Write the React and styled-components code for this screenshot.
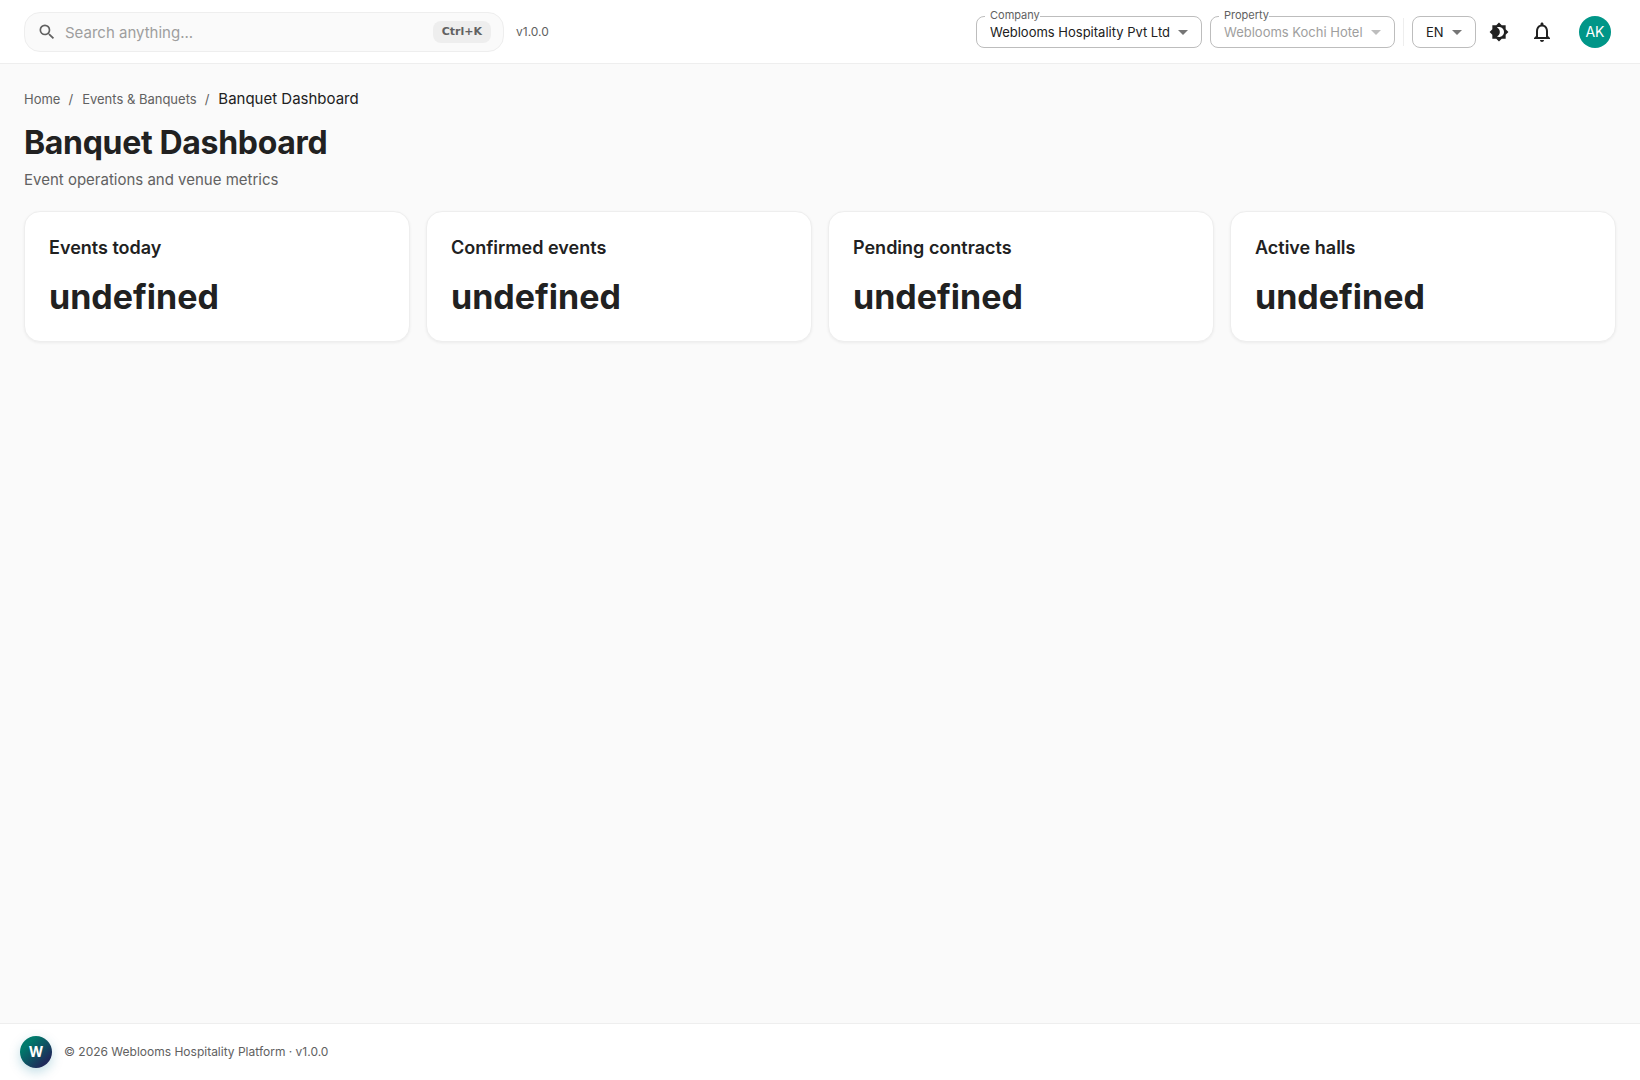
import React from 'react';
import styled, {createGlobalStyle} from 'styled-components';
import {MdSearch, MdBrightness4, MdNotificationsNone, MdArrowDropDown} from 'react-icons/md';

const GlobalStyle = createGlobalStyle`
:root {
  --primary: #009688;
  --text: #212121;
  --muted: #616161;
  --disabled: #9e9e9e;
  --line: #eeeeee;
  --page: #fafafa;
}
* { box-sizing: border-box; }
body {
  margin: 0;
  background: var(--page);
  color: var(--text);
  font-family: Inter, Roboto, sans-serif;
}
button, input, select { font-family: inherit; }
`;

const stats = ['Events today', 'Confirmed events', 'Pending contracts', 'Active halls'];

function SelectField({id, label, value, disabled}) {
  return <Field $disabled={disabled}>
    {label && <FieldLabel htmlFor={id}>{label}</FieldLabel>}
    <Select id={id} aria-label={label ? undefined : 'Language'} disabled={disabled}>
      <option>{value}</option>
    </Select>
    <MdArrowDropDown/>
  </Field>;
}

export default function App() {
  return <Shell>
    <GlobalStyle/>
    <Header>
      <SearchBox>
        <MdSearch/>
        <SearchInput type="search" aria-label="Search" placeholder="Search anything..."/>
        <Shortcut>Ctrl+K</Shortcut>
      </SearchBox>
      <Version>v1.0.0</Version>
      <Tools>
        <SelectField id="company" label="Company" value="Weblooms Hospitality Pvt Ltd"/>
        <SelectField id="property" label="Property" value="Weblooms Kochi Hotel" disabled/>
        <Divider/>
        <SelectField id="language" value="EN"/>
        <IconGroup>
          <IconButton aria-label="Toggle theme"><MdBrightness4 size={20}/></IconButton>
          <IconButton aria-label="Notifications"><MdNotificationsNone size={24}/></IconButton>
        </IconGroup>
        <Avatar aria-label="Account">AK</Avatar>
      </Tools>
    </Header>
    <Main>
      <nav aria-label="Breadcrumb">
        <Crumbs>
          <li><CrumbLink href="#home">Home</CrumbLink></li>
          <Slash>/</Slash>
          <li><CrumbLink href="#events">Events &amp; Banquets</CrumbLink></li>
          <Slash>/</Slash>
          <Current>Banquet Dashboard</Current>
        </Crumbs>
      </nav>
      <Title>Banquet Dashboard</Title>
      <Subtitle>Event operations and venue metrics</Subtitle>
      <CardGrid>
        {stats.map(name => <Card key={name}>
          <CardTitle>{name}</CardTitle>
          <CardValue>undefined</CardValue>
        </Card>)}
      </CardGrid>
    </Main>
    <Footer>
      <Brand>W</Brand>
      <span>© 2026 Weblooms Hospitality Platform · v1.0.0</span>
    </Footer>
  </Shell>;
}

const Shell = styled.div`
display: flex;
flex-direction: column;
min-height: 100vh;
`;

const Header = styled.header`
display: flex;
align-items: center;
height: 64px;
padding: 0 24px;
background: #fff;
border-bottom: 1px solid var(--line);
`;

const SearchBox = styled.div`
display: flex;
align-items: center;
flex: 0 1 480px;
height: 40px;
padding: 0 12px;
border: 1px solid var(--line);
border-radius: 16px;
background: var(--page);
> svg {
  flex: none;
  width: 20px;
  height: 20px;
  color: var(--muted);
}
`;

const SearchInput = styled.input`
flex: 1;
min-width: 0;
margin-left: 8px;
padding: 2px 0 0;
border: 0;
outline: 0;
background: transparent;
font-size: 15px;
line-height: 24px;
color: var(--text);
&::placeholder { color: var(--disabled); }
`;

const Shortcut = styled.kbd`
padding: 0 9px;
border-radius: 8px;
background: #eeeeee;
color: var(--muted);
font-family: "DejaVu Sans", sans-serif;
font-size: 11px;
font-weight: 700;
line-height: 22px;
`;

const Version = styled.span`
margin-left: 12px;
color: var(--muted);
font-size: 12px;
`;

const Tools = styled.div`
display: flex;
align-items: center;
gap: 8px;
margin-left: auto;
`;

const Field = styled.div`
display: flex;
align-items: center;
position: relative;
height: 32px;
border: 1px solid #bdbdbd;
border-radius: 8px;
color: ${props => props.$disabled ? 'var(--disabled)' : 'var(--text)'};
> svg {
  position: absolute;
  right: 6px;
  width: 24px;
  height: 24px;
  color: ${props => props.$disabled ? '#bdbdbd' : '#757575'};
  pointer-events: none;
}
`;

const FieldLabel = styled.label`
position: absolute;
top: -9px;
left: 8px;
padding-left: 5px;
background: #fff;
color: var(--muted);
font-size: 11px;
line-height: 14px;
`;

const Select = styled.select`
appearance: none;
height: 30px;
padding: 0 31px 0 13px;
border: 0;
border-radius: 8px;
background: transparent;
color: inherit;
font-size: 13px;
opacity: 1;
`;

const Divider = styled.div`
width: 1px;
height: 28px;
background: var(--line);
`;

const IconGroup = styled.div`
display: flex;
gap: 3px;
margin-left: -5px;
`;

const IconButton = styled.button`
display: flex;
align-items: center;
justify-content: center;
width: 40px;
height: 40px;
padding: 0;
border: 0;
border-radius: 50%;
background: transparent;
color: var(--text);
`;

const Avatar = styled.button`
width: 32px;
height: 32px;
margin: 0 5px 0 9px;
padding: 0;
border: 0;
border-radius: 50%;
background: var(--primary);
color: #fff;
font-size: 14px;
`;

const Main = styled.main`
flex: 1;
padding: 24px;
`;

const Crumbs = styled.ol`
display: flex;
align-items: center;
margin: 0;
padding: 0;
list-style: none;
font-size: 13px;
line-height: 22px;
color: var(--muted);
`;

const CrumbLink = styled.a`
color: inherit;
text-decoration: none;
`;

const Slash = styled.li`
margin: 0 9px 0 8px;
`;

const Current = styled.li`
color: var(--text);
font-size: 15px;
`;

const Title = styled.h1`
margin: 12px 0 0;
font-size: 32px;
font-weight: 700;
line-height: 42px;
letter-spacing: -0.01em;
`;

const Subtitle = styled.p`
margin: 4px 0 20px;
color: var(--muted);
font-size: 15px;
line-height: 23px;
`;

const CardGrid = styled.section`
display: grid;
grid-template-columns: repeat(4, 1fr);
gap: 16px;
@media (max-width: 900px) {
  grid-template-columns: repeat(2, 1fr);
}
`;

const Card = styled.article`
padding: 24px;
border: 1px solid var(--line);
border-radius: 16px;
background: #fff;
box-shadow: 0 1px 3px rgba(0, 0, 0, 0.06);
`;

const CardTitle = styled.h2`
margin: 0 0 16px;
font-size: 18px;
font-weight: 600;
line-height: 24px;
`;

const CardValue = styled.p`
margin: 0;
font-size: 34px;
font-weight: 700;
line-height: 41px;
`;

const Footer = styled.footer`
display: flex;
align-items: center;
gap: 12px;
height: 57px;
padding: 0 20px;
border-top: 1px solid var(--line);
background: #fff;
color: var(--muted);
font-size: 12px;
line-height: 16px;
`;

const Brand = styled.div`
display: flex;
align-items: center;
justify-content: center;
width: 32px;
height: 32px;
border-radius: 50%;
background: linear-gradient(135deg, #00796b 25%, #1e2a5a 80%);
box-shadow: 0 4px 12px rgba(0, 121, 150, 0.25);
color: #fff;
font-size: 14px;
font-weight: 700;
`;
